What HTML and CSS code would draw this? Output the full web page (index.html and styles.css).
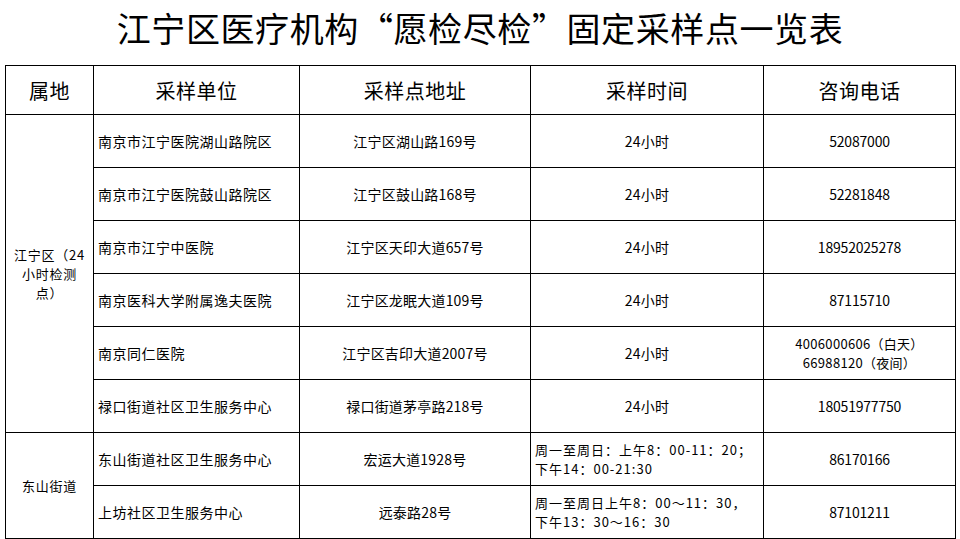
FILE: index.html
```html
<!DOCTYPE html>
<html lang="zh-CN">
<head>
<meta charset="utf-8">
<title>江宁区医疗机构“愿检尽检”固定采样点一览表</title>
<link rel="stylesheet" href="styles.css">
</head>
<body>
<h1 class="title">江宁区医疗机构“愿检尽检”固定采样点一览表</h1>
<table class="sheet">
  <colgroup>
    <col class="c-area"><col class="c-unit"><col class="c-addr"><col class="c-time"><col class="c-tel">
  </colgroup>
  <thead>
    <tr class="head">
      <th>属地</th><th>采样单位</th><th>采样点地址</th><th>采样时间</th><th>咨询电话</th>
    </tr>
  </thead>
  <tbody>
    <tr>
      <td class="area" rowspan="6">江宁区（24<br>小时检测<br>点）</td>
      <td class="unit">南京市江宁医院湖山路院区</td>
      <td class="mid">江宁区湖山路169号</td>
      <td class="mid">24小时</td>
      <td class="tel">52087000</td>
    </tr>
    <tr>
      <td class="unit">南京市江宁医院鼓山路院区</td>
      <td class="mid">江宁区鼓山路168号</td>
      <td class="mid">24小时</td>
      <td class="tel">52281848</td>
    </tr>
    <tr>
      <td class="unit">南京市江宁中医院</td>
      <td class="mid">江宁区天印大道657号</td>
      <td class="mid">24小时</td>
      <td class="tel">18952025278</td>
    </tr>
    <tr>
      <td class="unit">南京医科大学附属逸夫医院</td>
      <td class="mid">江宁区龙眠大道109号</td>
      <td class="mid">24小时</td>
      <td class="tel">87115710</td>
    </tr>
    <tr>
      <td class="unit">南京同仁医院</td>
      <td class="mid">江宁区吉印大道2007号</td>
      <td class="mid">24小时</td>
      <td class="tel two">4006000606（白天）<br>66988120（夜间）</td>
    </tr>
    <tr>
      <td class="unit">禄口街道社区卫生服务中心</td>
      <td class="mid">禄口街道茅亭路218号</td>
      <td class="mid">24小时</td>
      <td class="tel">18051977750</td>
    </tr>
    <tr>
      <td class="area" rowspan="2">东山街道</td>
      <td class="unit">东山街道社区卫生服务中心</td>
      <td class="mid">宏运大道1928号</td>
      <td class="time">周一至周日：上午8：00-11：20；<br>下午14：00-21:30</td>
      <td class="tel">86170166</td>
    </tr>
    <tr>
      <td class="unit">上坊社区卫生服务中心</td>
      <td class="mid">远泰路28号</td>
      <td class="time">周一至周日上午8：00～11：30，<br>下午13：30～16：30</td>
      <td class="tel">87101211</td>
    </tr>
  </tbody>
</table>
</body>
</html>
```
FILE: styles.css
```css
html, body {
  margin: 0;
  padding: 0;
  background: #ffffff;
  color: #000000;
  font-family: "Noto Sans CJK SC", "Noto Sans", sans-serif;
}

.title {
  margin: 0;
  height: 65px;
  box-sizing: border-box;
  padding-top: 7px;
  text-align: center;
  font-size: 34px;
  line-height: 42px;
  font-weight: normal;
  letter-spacing: 0.6px;
}

.sheet {
  margin-left: 5px;
  border-collapse: collapse;
  table-layout: fixed;
  width: 950px;
}

.c-area { width: 88px; }
.c-unit { width: 206px; }
.c-addr { width: 231px; }
.c-time { width: 233px; }
.c-tel  { width: 192px; }

.sheet th,
.sheet td {
  border: 1px solid #000000;
  padding: 0 4px;
  vertical-align: middle;
}

.head th {
  height: 48px;
  font-size: 20px;
  font-weight: normal;
  text-align: center;
  letter-spacing: 0.5px;
}

.sheet tbody tr {
  height: 53px;
}

.sheet td {
  font-size: 14px;
  line-height: 20px;
}

.area {
  text-align: center;
  padding: 0 2px;
}

.sheet td.area {
  font-size: 13px;
  line-height: 19px;
  letter-spacing: 0.8px;
}

.unit {
  text-align: left;
  white-space: nowrap;
  letter-spacing: 0.5px;
}

.mid {
  text-align: center;
  white-space: nowrap;
  letter-spacing: 0.2px;
}

.tel {
  text-align: center;
  white-space: nowrap;
  letter-spacing: -0.2px;
}

.sheet td.two {
  font-size: 13px;
  line-height: 19px;
  letter-spacing: 0.3px;
}

.sheet td.time {
  text-align: left;
  white-space: nowrap;
  font-size: 13px;
  line-height: 19px;
  letter-spacing: 1px;
}
```
